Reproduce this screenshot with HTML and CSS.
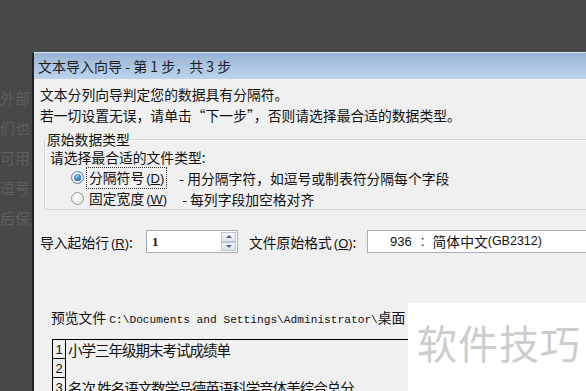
FILE: index.html
```html
<!DOCTYPE html>
<html lang="zh-CN">
<head>
  <meta charset="UTF-8">
  <meta name="viewport" content="width=device-width, initial-scale=1.0">
  <title>文本导入向导</title>
  <link rel="stylesheet" href="styles.css">
</head>
<body>

  <div class="backdrop">
    <!-- worksheet text behind the dialog -->
    <div class="page-text">
      <p>外部</p>
      <p>们也</p>
      <p>可用</p>
      <p>逗号</p>
      <p>后保</p>
    </div>

    <div class="wizard">
      <div class="title-bar">文本导入向导 - 第 1 步，共 3 步</div>

      <div class="wizard-body">
        <p class="line">文本分列向导判定您的数据具有分隔符。</p>
        <p class="line">若一切设置无误，请单击“下一步”，否则请选择最合适的数据类型。</p>

        <fieldset class="group">
          <legend>原始数据类型</legend>
          <p class="hint">请选择最合适的文件类型:</p>
          <div class="radio-row">
            <span class="radio checked"></span>
            <span class="option focus">分隔符号<span class="key">(<u>D</u>)</span></span>
            <span class="desc">- 用分隔字符，如逗号或制表符分隔每个字段</span>
          </div>
          <div class="radio-row">
            <span class="radio"></span>
            <span class="option">固定宽度<span class="key">(<u>W</u>)</span></span>
            <span class="desc">- 每列字段加空格对齐</span>
          </div>
        </fieldset>

        <div class="import-row">
          <span class="field-label start-label">导入起始行<span class="key">(<u>R</u>)</span>:</span>
          <div class="spin">
            <span class="spin-value">1</span>
            <span class="spin-btns">
              <span class="spin-btn"><i class="arrow-up"></i></span>
              <span class="spin-btn"><i class="arrow-down"></i></span>
            </span>
          </div>
          <span class="field-label origin-label">文件原始格式<span class="key">(<u>O</u>)</span>:</span>
          <div class="combo"><span class="code">936</span><span class="sep">:</span>简体中文<span class="ascii">(GB2312)</span></div>
        </div>

        <p class="preview-label">预览文件 <span class="mono">C:\Documents and Settings\Administrator\</span>桌面</p>

        <div class="preview">
          <div class="preview-row"><span class="num">1</span><span class="cell">小学三年级期末考试成绩单</span></div>
          <div class="preview-row"><span class="num">2</span><span class="cell"></span></div>
          <div class="preview-row"><span class="num">3</span><span class="cell">名次 姓名语文数学品德英语科学音体美综合总分</span></div>
        </div>
      </div>
    </div>
  </div>

  <div class="watermark">软件技巧</div>

</body>
</html>
```

FILE: styles.css
```css
body {
  margin: 0;
  padding: 0;
  width: 586px;
  height: 391px;
  overflow: hidden;
  background-color: #484848;
  font-family: "Noto Sans CJK SC", "Liberation Sans", sans-serif;
  position: relative;
}

.backdrop {
  display: flex;
  height: 391px;
}

/* faded worksheet text on the left */
.page-text {
  width: 32px;
  flex-shrink: 0;
  overflow: hidden;
  padding-top: 88px;
  color: #5f5f5f;
  font-size: 15px;
}

.page-text p {
  margin: 0;
  height: 30px;
  line-height: 20px;
  white-space: nowrap;
}

.wizard {
  width: 600px;
  flex-shrink: 0;
  margin-top: 52px;
  background-color: #f0f0f0;
  border-left: 2px solid #222;
  border-top-left-radius: 3px;
  color: #111;
  font-size: 13.8px;
}

.title-bar {
  height: 26px;
  line-height: 26px;
  padding-left: 4px;
  font-size: 14px;
  color: #1c1c1c;
  border-top: 1px solid #d8e3f0;
  background: linear-gradient(to bottom, #98b3d3, #b0c8e5 60%, #bdd3ec);
}

.wizard-body {
  padding: 5px 0 0 6px;
}

.line {
  margin: 0;
  height: 21px;
  line-height: 21px;
  white-space: nowrap;
}

.group {
  margin: 4px 0 0 4px;
  padding: 0 0 0 3px;
  border: 1px solid #d3d3d3;
  box-shadow: inset 1px 1px 0 #fff;
  border-radius: 2px;
}

.group legend {
  padding: 0;
  margin-left: -1px;
  line-height: 18px;
}

.hint {
  margin: 0;
  padding-left: 2px;
  height: 19px;
  line-height: 19px;
}

.radio-row {
  display: flex;
  align-items: center;
  height: 21px;
  white-space: nowrap;
}

.radio {
  width: 11px;
  height: 11px;
  margin-left: 23px;
  border-radius: 50%;
  border: 1px solid #9a9a9a;
  background: radial-gradient(circle at 40% 35%, #fff, #dcdcdc);
  position: relative;
}

.radio.checked {
  border-color: #5b7fa6;
}

.radio.checked::after {
  content: "";
  position: absolute;
  left: 2px;
  top: 2px;
  width: 7px;
  height: 7px;
  border-radius: 50%;
  background: radial-gradient(circle at 40% 35%, #8fd0f5, #1f66b0 70%, #134a85);
}

.option {
  margin-left: 2px;
  padding: 0 2px;
  line-height: 19px;
  border: 1px dotted transparent;
}

.option.focus {
  border-color: #333;
}

.key {
  font-family: "Liberation Sans", sans-serif;
  font-size: 13px;
  margin-left: 2px;
}

.desc {
  margin-left: 12px;
}

.import-row {
  display: flex;
  align-items: center;
  margin-top: 20px;
  height: 23px;
  white-space: nowrap;
}

.start-label {
  width: 106px;
}

.origin-label {
  width: 118px;
  margin-left: 11px;
}

.spin {
  width: 90px;
  height: 21px;
  border: 1px solid #a9adb5;
  background-color: #fff;
  display: flex;
  align-items: center;
  justify-content: space-between;
}

.spin-value {
  padding-left: 5px;
  font-family: "Liberation Serif", serif;
  font-weight: bold;
  font-size: 13px;
}

.spin-btns {
  display: flex;
  flex-direction: column;
  width: 15px;
  height: 19px;
  margin-right: 1px;
}

.spin-btn {
  flex: 1;
  border: 1px solid #b9c6d8;
  background: linear-gradient(to bottom, #f3f6fa, #dde5ef);
  display: flex;
  align-items: center;
  justify-content: center;
}

.arrow-up,
.arrow-down {
  width: 0;
  height: 0;
  border-left: 3px solid transparent;
  border-right: 3px solid transparent;
}

.arrow-up {
  border-bottom: 3px solid #4d6185;
}

.arrow-down {
  border-top: 3px solid #4d6185;
}

.combo {
  width: 240px;
  height: 21px;
  line-height: 21px;
  border: 1px solid #a9adb5;
  background-color: #fff;
  padding-left: 22px;
  display: flex;
  align-items: center;
}

.code {
  font-family: "Liberation Sans", sans-serif;
  font-size: 13px;
}

.sep {
  margin: 0 8px 0 9px;
  font-family: "Liberation Sans", sans-serif;
}

.ascii {
  font-family: "Liberation Sans", sans-serif;
  font-size: 12.5px;
}

.preview-label {
  margin: 54px 0 0 11px;
  height: 20px;
  line-height: 20px;
  white-space: nowrap;
}

.mono {
  font-family: "Liberation Mono", monospace;
  font-size: 11.2px;
}

.preview {
  margin: 12px 0 0 12px;
  border-top: 1px solid #000;
  border-left: 1px solid #000;
  width: 560px;
}

.preview-row {
  display: flex;
  height: 19px;
}

.num {
  width: 12px;
  border-right: 1px solid #000;
  border-bottom: 1px solid #000;
  font-family: "Liberation Sans", sans-serif;
  font-size: 13px;
  line-height: 20px;
  text-align: center;
}

.cell {
  padding-left: 2px;
  font-size: 14.5px;
  line-height: 19px;
  letter-spacing: -1px;
  white-space: nowrap;
}

.watermark {
  position: absolute;
  left: 408px;
  top: 303px;
  right: 0;
  bottom: 0;
  background-color: #fff;
  color: #cdcdcd;
  font-size: 40px;
  letter-spacing: 1px;
  line-height: 44px;
  padding: 17px 0 0 9px;
  white-space: nowrap;
}
```
